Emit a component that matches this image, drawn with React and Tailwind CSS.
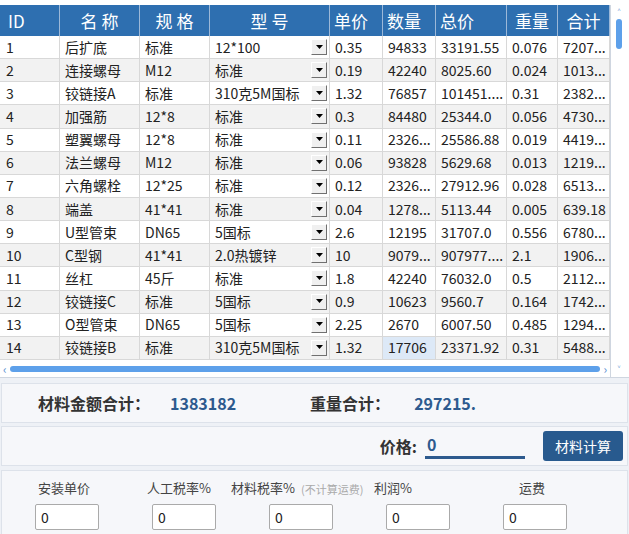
const rows = [
  ["1", "后扩底", "标准", "12*100", "0.35", "94833", "33191.55", "0.076", "7207..."],
  ["2", "连接螺母", "M12", "标准", "0.19", "42240", "8025.60", "0.024", "1013..."],
  ["3", "铰链接A", "标准", "310克5M国标", "1.32", "76857", "101451....", "0.31", "2382..."],
  ["4", "加强筋", "12*8", "标准", "0.3", "84480", "25344.0", "0.056", "4730..."],
  ["5", "塑翼螺母", "12*8", "标准", "0.11", "2326...", "25586.88", "0.019", "4419..."],
  ["6", "法兰螺母", "M12", "标准", "0.06", "93828", "5629.68", "0.013", "1219..."],
  ["7", "六角螺栓", "12*25", "标准", "0.12", "2326...", "27912.96", "0.028", "6513..."],
  ["8", "端盖", "41*41", "标准", "0.04", "1278...", "5113.44", "0.005", "639.18"],
  ["9", "U型管束", "DN65", "5国标", "2.6", "12195", "31707.0", "0.556", "6780..."],
  ["10", "C型钢", "41*41", "2.0热镀锌", "10", "9079...", "907977....", "2.1", "1906..."],
  ["11", "丝杠", "45斤", "标准", "1.8", "42240", "76032.0", "0.5", "2112..."],
  ["12", "铰链接C", "标准", "5国标", "0.9", "10623", "9560.7", "0.164", "1742..."],
  ["13", "O型管束", "DN65", "5国标", "2.25", "2670", "6007.50", "0.485", "1294..."],
  ["14", "铰链接B", "标准", "310克5M国标", "1.32", "17706", "23371.92", "0.31", "5488..."],
];
const widths = ["w-[60px]", "w-[80px]", "w-[70px]", "w-[120px]", "w-[53px]", "w-[53px]", "w-[71px]", "w-[51px]", "w-[52px]"];
const heads = ["ID", "名 称", "规 格", "型 号", "单价", "数量", "总价", "重量", "合计"];
const headAlign = ["text-left pl-2", "text-center", "text-center", "text-center", "text-left pl-1", "text-left pl-1", "text-left pl-1", "text-center", "text-center"];

function Arrow() {
  return (
    <span className="w-[16px] h-[16px] flex items-center justify-center bg-[#f0f0f0] border-r border-b border-[#707070] border-l border-t border-l-white border-t-white shrink-0">
      <svg width="7" height="5" viewBox="0 0 7 5"><path d="M0 0h7L3.5 4z" fill="#000" /></svg>
    </span>
  );
}

export default function App() {
  return (
    <div className="w-[629px] h-[534px] bg-[#eef1f6] overflow-hidden text-[#222]" style={{ fontFamily: '"Noto Sans CJK SC", "Noto Sans", sans-serif' }}>
      <div className="pt-[5px] flex h-[378px] bg-white border-b border-[#cfd6e0]">
        <div className="w-[610px] flex flex-col">
          <div className="flex h-[31px] bg-[#2e6fb0] text-white text-[17px]">
            {heads.map((h, i) => (
              <div key={i} className={`${widths[i]} ${headAlign[i]} border-r border-[#9cb8d8] leading-[31px] shrink-0`}>{h}</div>
            ))}
          </div>
          {rows.map((r, ri) => (
            <div key={ri} className={`flex h-[23.3px] text-[14px] border-b border-[#d8d8d8] ${ri % 2 ? "bg-[#f2f2f2]" : "bg-white"}`}>
              {r.map((c, ci) => (
                <div key={ci} className={`${widths[ci]} shrink-0 border-r border-[#d8d8d8] flex items-center ${ci === 0 ? "pl-[6px]" : "pl-[5px]"} whitespace-nowrap overflow-hidden ${ri === 13 && ci === 5 ? "bg-[#dde9f7]" : ""}`}>
                  {ci === 3 ? (
                    <div className="flex w-full items-center justify-between pr-[2px]"><span>{c}</span><Arrow /></div>
                  ) : c}
                </div>
              ))}
            </div>
          ))}
          <div className="mt-auto h-[17px] flex items-center px-[3px] gap-[3px] text-[#5a8fd0] text-[12px]">
            <span>‹</span>
            <div className="flex-1 h-[6px] rounded-full bg-[#5da0ea]" />
            <span>›</span>
          </div>
        </div>
        <div className="w-[17px] border-l border-[#cfd6e0] flex flex-col items-center text-[#5a8fd0] text-[11px] bg-white">
          <span className="leading-[14px]">˄</span>
          <div className="w-[6px] h-[30px] rounded-full bg-[#5da0ea]" />
          <div className="flex-1" />
          <span className="leading-[14px] mb-[1px]">˅</span>
        </div>
      </div>
      <div className="mt-[5px] mx-[1px] h-[40px] bg-[#f6f7fa] border border-[#dde2ea] flex items-center font-bold text-[16px]">
        <span className="ml-[36px] text-[#333]">材料金额合计：</span>
        <span className="ml-[20px] text-[#2d5a8e]">1383182</span>
        <span className="ml-[74px] text-[#333]">重量合计：</span>
        <span className="ml-[24px] text-[#2d5a8e]">297215.</span>
      </div>
      <div className="mt-[3px] mx-[1px] h-[40px] bg-[#f6f7fa] border border-[#dde2ea] flex items-center justify-end pr-[4px]">
        <span className="font-bold text-[16px] text-[#333]">价格:</span>
        <div className="ml-[8px] w-[100px] h-[26px] border-b-[3px] border-[#2d5a8e] text-[#2d5a8e] font-bold text-[16px] leading-[22px] pl-[2px]">0</div>
        <button className="ml-[18px] w-[80px] h-[30px] rounded-[3px] bg-[#285a8e] text-white text-[14px]">材料计算</button>
      </div>
      <div className="mt-[4px] mx-[1px] h-[70px] bg-[#f6f7fa] border border-[#dde2ea] flex text-[13px] text-[#444]">
        {[["安装单价", ""], ["人工税率%", ""], ["材料税率%", "(不计算运费)"], ["利润%", ""], ["运费", ""]].map(([l, n], i) => (
          <div key={i} className="w-[117px] relative first:ml-[33px]">
            <div className={`h-[26px] flex items-end whitespace-nowrap ${i === 0 ? "pl-[3px]" : i === 1 ? "-ml-[5px]" : i === 2 ? "-ml-[38px]" : i === 3 ? "-ml-[12px]" : "pl-[16px]"}`}>
              {l}{n && <span className="ml-[6px] text-[11px] text-[#aaa]">{n}</span>}
            </div>
            <div className="mt-[7px] w-[64px] h-[26px] bg-white border border-[#aaa] rounded-[2px] pl-[5px] leading-[24px] text-[14px] text-[#222]">0</div>
          </div>
        ))}
      </div>
    </div>
  );
}
